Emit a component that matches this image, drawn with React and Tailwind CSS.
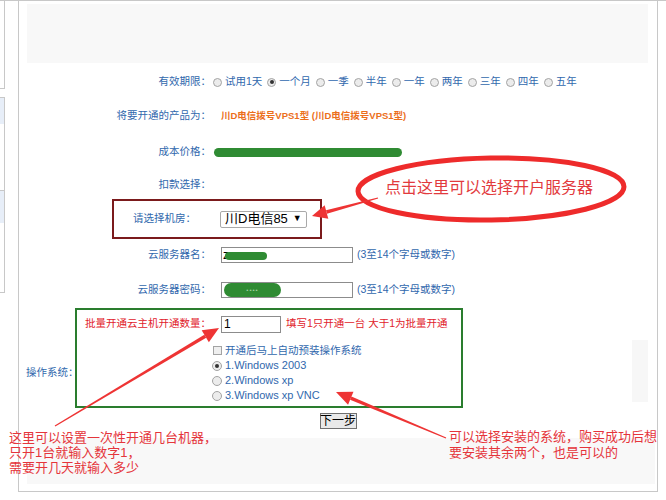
const periods = ['试用1天', '一个月', '一季', '半年', '一年', '两年', '三年', '四年', '五年']

function Radio({ checked, size = 'sm' }) {
  const box = size === 'sm' ? 'w-[9px] h-[9px]' : 'w-[10px] h-[10px]'
  return (
    <span className={`${box} shrink-0 rounded-full border border-[#a3a3a3] bg-[#ececec] flex items-center justify-center`}>
      {checked && <span className="w-[4px] h-[4px] rounded-full bg-[#333]" />}
    </span>
  )
}

function Label({ children, className = '' }) {
  return (
    <span className={`w-[192px] shrink-0 text-right whitespace-nowrap text-[#3168ad] ${className}`}>{children}</span>
  )
}

function Arrow({ x1, y1, x2, y2, head = 15, hw = 7 }) {
  const len = Math.hypot(x2 - x1, y2 - y1)
  const ux = (x2 - x1) / len
  const uy = (y2 - y1) / len
  const px = -uy
  const py = ux
  const bx = x2 - ux * head
  const by = y2 - uy * head
  const shaft = [
    [x1 + px * 0.6, y1 + py * 0.6],
    [bx + px * 1.8, by + py * 1.8],
    [bx - px * 1.8, by - py * 1.8],
    [x1 - px * 0.6, y1 - py * 0.6],
  ]
  const tip = [
    [x2, y2],
    [bx + px * hw, by + py * hw],
    [bx - px * hw, by - py * hw],
  ]
  return (
    <g fill="#ee3434">
      <polygon points={shaft.map(p => p.join(',')).join(' ')} />
      <polygon points={tip.map(p => p.join(',')).join(' ')} />
    </g>
  )
}

export default function App() {
  return (
    <div className="relative w-[666px] h-[500px] overflow-hidden bg-white border-t border-[#c8c8c8] flex text-[10.5px] font-['Liberation_Sans','Noto_Sans_CJK_SC',sans-serif]">
      {/* left sidebar fragments */}
      <div className="w-[18px] shrink-0 flex flex-col">
        <div className="w-[5px] h-[88px] border-r border-b border-[#c8c8c8]" />
        <div className="w-[5px] h-[94px] mt-[8px] border-r border-t border-b border-[#c8c8c8]">
          <div className="h-[26px] bg-[#e7eef8]" />
        </div>
        <div className="w-[5px] h-[102px] border-r border-b border-[#c8c8c8]">
          <div className="h-[32px] bg-[#e7eef8]" />
        </div>
      </div>

      <div className="w-[640px] h-[491px] shrink-0 border-l border-r border-b border-[#c8c8c8] flex flex-col">
        <div className="mt-[3px] ml-[8px] w-[621px] h-[59px] bg-[#f8f8f8]" />

        {/* 有效期限 */}
        <div className="mt-[7px] h-[24px] flex items-center">
          <Label>有效期限：</Label>
          <div className="flex items-center text-[#3168ad] whitespace-nowrap">
            {periods.map((p, i) => (
              <span key={p} className="flex items-center">
                <span className="ml-[2px] mr-[3px]"><Radio checked={i === 1} /></span>
                <span className="mr-[3px]">{p}</span>
              </span>
            ))}
          </div>
        </div>

        {/* 产品 */}
        <div className="mt-[10px] h-[24px] flex items-center">
          <Label>将要开通的产品为：</Label>
          <span className="ml-[10px] font-bold text-[9.5px] text-[#ec6f1c] whitespace-nowrap">川D电信拨号VPS1型 (川D电信拨号VPS1型)</span>
        </div>

        {/* 成本价格 */}
        <div className="mt-[12px] h-[24px] flex items-center">
          <Label>成本价格：</Label>
          <span className="ml-[3px] w-[188px] h-[9px] rounded-full bg-[#2f8b33]" />
        </div>

        {/* 扣款选择 */}
        <div className="mt-[9px] h-[24px] flex items-center">
          <Label>扣款选择：</Label>
        </div>

        {/* 机房 */}
        <div className="mt-[2px] ml-[93px] w-[210px] h-[40px] border-2 border-[#7b1a1c] flex items-center">
          <span className="pl-[19px] text-[#3168ad] whitespace-nowrap">请选择机房：</span>
          <div className="ml-[24px] h-[17px] px-[4px] border border-[#a9a9a9] rounded-[2px] bg-white flex items-center text-[13px] text-black whitespace-nowrap">
            <span>川D电信85</span>
            <span className="ml-[5px] text-[9px]">▼</span>
          </div>
        </div>

        {/* 云服务器名 */}
        <div className="mt-[4px] h-[24px] flex items-center">
          <Label>云服务器名：</Label>
          <div className="relative ml-[10px] w-[132px] h-[16px] border border-[#8c8c8c] bg-white text-[12px] leading-[14px] pl-[1px] text-black">
            z
            <span className="absolute left-[3px] top-[4px] w-[42px] h-[8px] rounded-full bg-[#2f8b33]" />
          </div>
          <span className="ml-[4px] text-[#3168ad] whitespace-nowrap">(3至14个字母或数字)</span>
        </div>

        {/* 云服务器密码 */}
        <div className="mt-[11px] h-[24px] flex items-center">
          <Label>云服务器密码：</Label>
          <div className="relative ml-[10px] w-[132px] h-[16px] border border-[#8c8c8c] bg-white">
            <span className="absolute left-[2px] top-[0px] w-[57px] h-[14px] rounded-full bg-[#2f8b33] flex items-center justify-center text-[6px] text-[#9fd09f] tracking-[1px]">••••</span>
          </div>
          <span className="ml-[4px] text-[#3168ad] whitespace-nowrap">(3至14个字母或数字)</span>
        </div>

        {/* 操作系统 */}
        <div className="mt-[6px] flex items-start">
          <span className="ml-[7px] w-[49px] mt-[57px] text-[#3168ad] whitespace-nowrap">操作系统：</span>
          <div className="w-[388px] h-[100px] border-2 border-[#2a7d2e] flex flex-col pt-[4px]">
            <div className="h-[20px] flex items-center">
              <span className="w-[134px] shrink-0 text-right whitespace-nowrap text-[#e1222b]">批量开通云主机开通数量：</span>
              <div className="ml-[10px] w-[60px] h-[17px] border border-[#8c8c8c] bg-white text-[12px] leading-[15px] pl-[2px] text-black">1</div>
              <span className="ml-[5px] text-[#e1222b] whitespace-nowrap">填写1只开通一台 大于1为批量开通</span>
            </div>
            <div className="mt-[9px] h-[15px] pl-[136px] flex items-center text-[#3168ad] whitespace-nowrap">
              <span className="w-[9px] h-[9px] mr-[3px] border border-[#a3a3a3] bg-[#efefef]" />
              开通后马上自动预装操作系统
            </div>
            {['1.Windows 2003', '2.Windows xp', '3.Windows xp VNC'].map((os, i) => (
              <div key={os} className="h-[15px] pl-[135px] flex items-center text-[11px] text-[#3168ad] whitespace-nowrap">
                <span className="mr-[3px]"><Radio checked={i === 0} size="md" /></span>
                {os}
              </div>
            ))}
          </div>
          <div className="ml-auto mr-[9px] mt-[32px] w-[16px] h-[62px] bg-[#f7f7f7]" />
        </div>

        <div className="mt-[5px] flex justify-center">
          <button className="w-[37px] h-[16px] p-0 border border-[#707070] bg-[#e9e9e9] text-[12px] leading-[14px] text-black whitespace-nowrap flex items-center justify-center">下一步</button>
        </div>

        <div className="mt-[9px] ml-[8px] mr-[2px] h-[46px] bg-[#f8f8f8]" />
      </div>

      {/* annotations */}
      <svg className="absolute left-0 top-0 pointer-events-none" width="666" height="500" viewBox="0 0 666 500">
        <ellipse cx="491" cy="188" rx="133" ry="31" fill="none" stroke="#ee2b2b" strokeWidth="5" transform="rotate(-1 491 188)" />
        <Arrow x1={378} y1={197} x2={312} y2={215} />
        <Arrow x1={55} y1={425} x2={219} y2={327} head={16} />
        <Arrow x1={446} y1={437} x2={336} y2={391} head={16} />
      </svg>
      <div className="absolute left-[385px] top-[177px] text-[16px] leading-[20px] text-[#e23a3d] whitespace-nowrap">点击这里可以选择开户服务器</div>
      <div className="absolute left-[9px] top-[429px] text-[13px] leading-[15px] text-[#e5353b] whitespace-nowrap">
        <div>这里可以设置一次性开通几台机器，</div>
        <div>只开1台就输入数字1，</div>
        <div>需要开几天就输入多少</div>
      </div>
      <div className="absolute left-[449px] top-[428px] text-[13px] leading-[16px] text-[#e5353b] whitespace-nowrap">
        <div>可以选择安装的系统，购买成功后想</div>
        <div>要安装其余两个，也是可以的</div>
      </div>
    </div>
  )
}
